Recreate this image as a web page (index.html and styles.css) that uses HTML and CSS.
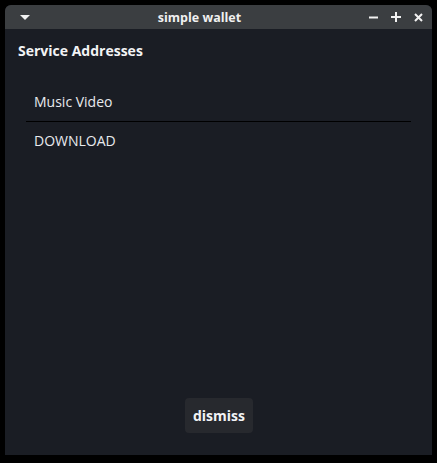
FILE: index.html
```html
<!DOCTYPE html>
<html>
<head>
<meta charset="utf-8">
<link rel="stylesheet" href="styles.css">
</head>
<body>
<div class="window">
  <div class="titlebar">
    <div class="tb-left">
      <svg width="10" height="6" viewBox="0 0 10 6"><path d="M0 0 L10 0 L5 5 Z" fill="#f2f2f2"/></svg>
    </div>
    <div class="tb-title">simple wallet</div>
    <div class="tb-right">
      <svg width="9" height="9" viewBox="0 0 9 9"><rect x="0" y="3.5" width="9" height="2" fill="#f2f2f2"/></svg>
      <svg width="10" height="10" viewBox="0 0 10 10"><rect x="0" y="4" width="10" height="2" fill="#f2f2f2"/><rect x="4" y="0" width="2" height="10" fill="#f2f2f2"/></svg>
      <svg width="9" height="9" viewBox="0 0 9 9"><path d="M1 1 L8 8 M8 1 L1 8" stroke="#f2f2f2" stroke-width="2"/></svg>
    </div>
  </div>
  <div class="content">
    <h1 class="heading">Service Addresses</h1>
    <ul class="list">
      <li class="item">Music Video</li>
      <li class="item">DOWNLOAD</li>
    </ul>
    <div class="footer">
      <button class="btn">dismiss</button>
    </div>
  </div>
</div>
</body>
</html>
```
FILE: styles.css
```css
html, body {
  margin: 0;
  padding: 0;
  background: #000;
}
body {
  padding: 5px 5px 8px 5px;
  font-family: "Open Sans", "Noto Sans", sans-serif;
  color: #eceef0;
}
.window {
  width: 427px;
  height: 450px;
  display: flex;
  flex-direction: column;
  border-radius: 6px 6px 0 0;
  overflow: hidden;
  background: #1a1d24;
}
.titlebar {
  height: 24px;
  flex: none;
  background: #3b3e41;
  display: flex;
  align-items: center;
}
.tb-left {
  width: 25px;
  display: flex;
  justify-content: flex-end;
  padding-top: 1px;
}
.tb-title {
  flex: 1;
  text-align: center;
  font-weight: 700;
  font-size: 12.5px;
  color: #f0f0f0;
}
.tb-right {
  display: flex;
  align-items: center;
  gap: 13px;
  padding-right: 7px;
  width: 56px;
}
.content {
  flex: 1;
  display: flex;
  flex-direction: column;
}
.heading {
  margin: 12px 0 0 13px;
  font-size: 14px;
  font-weight: 700;
  line-height: 20px;
  color: #f2f3f5;
}
.list {
  list-style: none;
  margin: 21px 21px 0 21px;
  padding: 0;
}
.item {
  height: 39px;
  line-height: 39px;
  padding-left: 8px;
  font-size: 14px;
  color: #e8eaee;
}
.item + .item {
  border-top: 1px solid #000;
  line-height: 37px;
}
.footer {
  margin-top: auto;
  display: flex;
  justify-content: center;
  padding-bottom: 22px;
}
.btn {
  width: 68px;
  height: 35px;
  border: none;
  border-radius: 4px;
  background: #27292e;
  color: #f2f3f5;
  font-family: "Open Sans", "Noto Sans", sans-serif;
  font-weight: 700;
  font-size: 14px;
  padding: 0;
  margin-left: 1px;
}
```
